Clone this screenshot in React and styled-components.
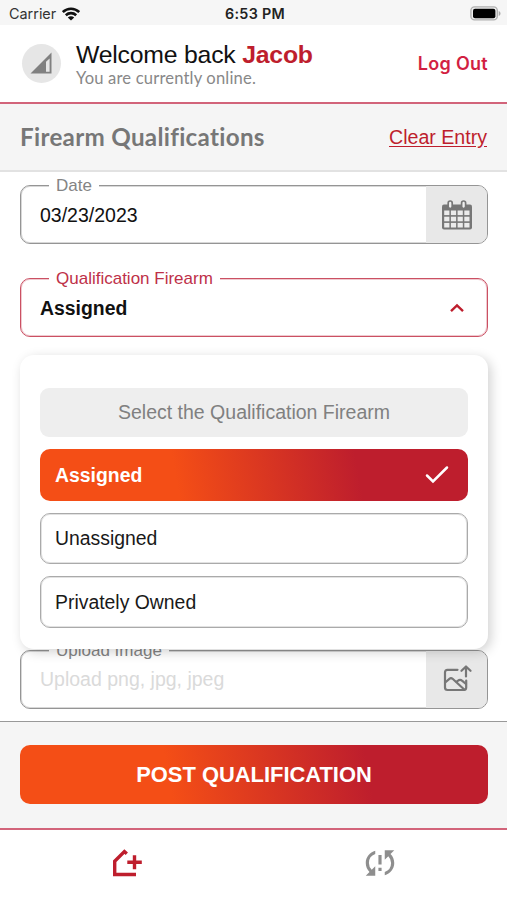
import styled, { createGlobalStyle, css } from "styled-components";
import { MdSyncProblem } from "react-icons/md";

const GlobalStyle = createGlobalStyle`
  * {
    box-sizing: border-box;
    margin: 0;
    padding: 0;
  }

  body {
    background: #fff;
    font-family: "Liberation Sans", Arial, sans-serif;
  }

  svg {
    display: block;
    flex-shrink: 0;
  }

  button {
    border: none;
    background: none;
    font-family: inherit;
  }
`;

const gradient = css`
  background: linear-gradient(80deg, #f44e16 32%, #be1e2d 74%);
`;

const Screen = styled.div`
  display: flex;
  flex-direction: column;
  width: 507px;
  height: 900px;
  overflow: hidden;
`;

const StatusBar = styled.div`
  display: grid;
  grid-template-columns: 1fr auto 1fr;
  align-items: center;
  height: 25px;
  padding: 2px 6px 0 9px;
  background: #f6f6f6;
  font-family: Inter, sans-serif;
  font-size: 14.4px;
  color: #333;
`;

const Carrier = styled.div`
  display: flex;
  align-items: center;
  gap: 6px;
`;

const Clock = styled.div`
  font-weight: 600;
  font-size: 14.3px;
  letter-spacing: 0.3px;
  color: #222;
`;

const Battery = styled.div`
  justify-self: end;
  margin-top: -1px;
`;

const Header = styled.header`
  display: flex;
  align-items: center;
  height: 79px;
  padding: 0 19px 0 22px;
  border-bottom: 2px solid #d2647a;
`;

const Avatar = styled.div`
  display: grid;
  place-items: center;
  width: 39px;
  height: 39px;
  margin-right: 15px;
  padding: 0 2px 1px 0;
  border-radius: 50%;
  background: #e6e6e6;
`;

const Greeting = styled.div`
  flex: 1;
`;

const Welcome = styled.h1`
  font-size: 24.8px;
  line-height: 28px;
  font-weight: 400;
  letter-spacing: -0.22px;
  color: #111;
  white-space: nowrap;

  strong {
    color: #be1e2d;
  }
`;

const OnlineStatus = styled.p`
  font-family: Lato, sans-serif;
  font-size: 16.6px;
  line-height: 18px;
  letter-spacing: 0.16px;
  color: #888;
`;

const LogOut = styled.button`
  font-family: Inter, sans-serif;
  font-size: 18px;
  font-weight: 600;
  letter-spacing: 0.3px;
  color: #d21f42;
`;

const TitleBar = styled.div`
  display: flex;
  align-items: center;
  justify-content: space-between;
  height: 68px;
  padding: 0 20px;
  border-bottom: 2px solid #e2e2e2;
  background: #f5f5f5;
`;

const Title = styled.h2`
  margin-top: -2px;
  font-family: Lato, sans-serif;
  font-size: 24.2px;
  font-weight: 700;
  font-variant-ligatures: none;
  letter-spacing: 0.3px;
  color: #777;
`;

const ClearEntry = styled.a`
  padding-top: 1px;
  font-size: 19.6px;
  color: #be1e2d;
  text-decoration: underline;
  text-underline-offset: 2px;
`;

const Form = styled.main`
  flex: 1;
  min-height: 0;
  padding: 13px 19px 0 20px;
`;

const StyledField = styled.div`
  position: relative;
  display: flex;
  align-items: center;
  justify-content: space-between;
  height: 59px;
  margin-top: ${(props) => props.$top || "0"};
  border: 1px solid ${(props) => (props.$active ? "#cb5063" : "#959595")};
  border-radius: 10px;
  box-shadow: inset 0 0 0 1px
    ${(props) => (props.$active ? "rgba(203, 80, 99, 0.3)" : "#d8d8d8")};
  color: ${(props) => (props.$active ? "#be3048" : "#848484")};
`;

const FieldLabel = styled.label`
  position: absolute;
  top: -9px;
  left: 28px;
  padding: 0 7px;
  background: #fff;
  font-size: 17px;
  line-height: 18px;
  white-space: nowrap;
`;

const FieldValue = styled.div`
  padding: 1px 0 0 19px;
  font-size: ${(props) => (props.$bold ? "19.4px" : "19.5px")};
  font-weight: ${(props) => (props.$bold ? 700 : 400)};
  color: ${(props) => (props.$muted ? "#dadada" : "#111")};
`;

const Addon = styled.div`
  display: grid;
  place-items: center;
  align-self: stretch;
  width: 61px;
  border-radius: 0 9px 9px 0;
  background: #e8e8e8;
`;

const Caret = styled.div`
  padding-right: 22px;
`;

const Menu = styled.div`
  position: relative;
  z-index: 1;
  display: flex;
  flex-direction: column;
  gap: 12px;
  height: 294px;
  margin-top: 18px;
  padding: 33px 20px 0;
  border-radius: 14px;
  background: #fff;
  box-shadow: 3px 3px 12px rgba(0, 0, 0, 0.18);
`;

const MenuHint = styled.div`
  height: 49px;
  border-radius: 9px;
  background: #eee;
  font-size: 19.5px;
  line-height: 49px;
  text-align: center;
  color: #808080;
`;

const Option = styled.div`
  display: flex;
  align-items: center;
  justify-content: space-between;
  height: 51.5px;
  padding: 1px 18px 0 14px;
  border: 1px solid #aaa;
  border-radius: 10px;
  box-shadow: inset 0 0 0 1px #e2e2e2;
  font-size: 19.4px;
  color: #191919;

  ${(props) =>
    props.$selected &&
    css`
      ${gradient}
      padding: 1px 19px 0 15px;
      border: none;
      box-shadow: none;
      font-weight: 700;
      color: #fff;
    `}
`;

const Footer = styled.footer`
  height: 109px;
  padding: 23px 19px 0 20px;
  border-top: 1px solid #999;
  border-bottom: 2px solid #d2647a;
  background: #f5f5f5;
`;

const PostButton = styled.button`
  ${gradient}
  display: block;
  width: 100%;
  height: 59px;
  border-radius: 10px;
  font-size: 21.9px;
  font-weight: 700;
  color: #fff;
`;

const TabBar = styled.nav`
  display: grid;
  grid-template-columns: 1fr 1fr;
  height: 70px;
  padding-bottom: 4px;
`;

const Tab = styled.div`
  display: grid;
  place-items: center;
  color: ${(props) => (props.$active ? "#be1e2d" : "#8e8e8e")};
`;

function WifiIcon() {
  return (
    <svg width="18" height="14" viewBox="0 0 18 14">
      <path
        d="M.8 5C5.5.6 12.5.6 17.2 5M3.8 8.2c3-2.8 7.4-2.8 10.4 0"
        fill="none"
        stroke="#111"
        strokeWidth="2.6"
      />
      <path d="M9 13.6 5.8 10.4c1.8-1.6 4.6-1.6 6.4 0z" fill="#111" />
    </svg>
  );
}

function BatteryIcon() {
  return (
    <svg width="31" height="15" viewBox="0 0 31 15">
      <rect
        x="0.9"
        y="0.9"
        width="26.4"
        height="13"
        rx="3.6"
        fill="#eee"
        stroke="#b0b0b0"
        strokeWidth="1.4"
      />
      <rect x="3" y="2.7" width="22.4" height="9.6" rx="2" fill="#000" />
      <path d="M28.7 5c2.4 1 2.4 4 0 5z" fill="#aaa" />
    </svg>
  );
}

function SignalIcon() {
  return (
    <svg width="24" height="24" viewBox="0 0 24 24">
      <path d="M1.5 22.5h21V1.5z" fill="#808080" />
      <path d="M17 20.8h3.6V7.4L17 10.8z" fill="#e6e6e6" />
    </svg>
  );
}

function CalendarIcon() {
  return (
    <svg width="30" height="30" viewBox="0 0 30 30">
      <rect x="0" y="4.5" width="30" height="25" rx="2" fill="#777" />
      <g fill="#ebebeb">
        {[10.5, 16.7, 22.9].map((y) =>
          [2.2, 8.9, 15.6, 22.3].map((x) => (
            <rect key={`${x}-${y}`} x={x} y={y} width="5.2" height="4.6" />
          ))
        )}
      </g>
      <g fill="#f0f0f0" stroke="#777" strokeWidth="1.7">
        <rect x="6.2" y="1" width="4" height="7.6" rx="2" />
        <rect x="19.6" y="1" width="4" height="7.6" rx="2" />
      </g>
    </svg>
  );
}

function UploadImageIcon() {
  return (
    <svg
      width="30"
      height="30"
      viewBox="0 0 30 30"
      fill="none"
      stroke="#777"
      strokeWidth="2.2"
      strokeLinecap="round"
      strokeLinejoin="round"
    >
      <path d="M15.5 5.8H5.5Q3 5.8 3 8.3v15.2Q3 26 5.5 26h16.2q2.5 0 2.5-2.5v-7" />
      <path d="m3.2 18.5 4.2-3.7q1.6-1.4 3.2 0L22.5 25.8" />
      <path d="m14.5 17.8 1.2-1q2.4-1.7 4.6 0l3.7 3.2" />
      <path d="M24 12.5V3M19.5 6.8 24 2.5l4.5 4.3" />
    </svg>
  );
}

function HomePlusIcon() {
  return (
    <svg
      width="32"
      height="30"
      viewBox="0 0 32 30"
      fill="none"
      stroke="currentColor"
      strokeWidth="3.4"
    >
      <path d="m15.8 5.7-2.4-2.2-9.7 9.7v13.3H25" />
      <path d="M23.5 7.2v14M16.3 14.2h14.5" />
    </svg>
  );
}

function Field({ label, value, top, active, bold, muted, children }) {
  return (
    <StyledField $top={top} $active={active}>
      <FieldLabel>{label}</FieldLabel>
      <FieldValue $bold={bold} $muted={muted}>
        {value}
      </FieldValue>
      {children}
    </StyledField>
  );
}

const options = ["Assigned", "Unassigned", "Privately Owned"];

function FirearmMenu({ selected }) {
  return (
    <Menu>
      <MenuHint>Select the Qualification Firearm</MenuHint>
      {options.map((option) => (
        <Option key={option} $selected={option === selected}>
          {option}
          {option === selected && (
            <svg width="24" height="20" viewBox="0 0 24 20">
              <path
                d="m2 10.5 6 6L22 2.5"
                fill="none"
                stroke="#fff"
                strokeWidth="2.5"
                strokeLinecap="round"
              />
            </svg>
          )}
        </Option>
      ))}
    </Menu>
  );
}

function App() {
  return (
    <>
      <GlobalStyle />
      <Screen>
        <StatusBar>
          <Carrier>
            Carrier
            <WifiIcon />
          </Carrier>
          <Clock>6:53 PM</Clock>
          <Battery>
            <BatteryIcon />
          </Battery>
        </StatusBar>

        <Header>
          <Avatar>
            <SignalIcon />
          </Avatar>
          <Greeting>
            <Welcome>
              Welcome back <strong>Jacob</strong>
            </Welcome>
            <OnlineStatus>You are currently online.</OnlineStatus>
          </Greeting>
          <LogOut>Log Out</LogOut>
        </Header>

        <TitleBar>
          <Title>Firearm Qualifications</Title>
          <ClearEntry>Clear Entry</ClearEntry>
        </TitleBar>

        <Form>
          <Field label="Date" value="03/23/2023">
            <Addon>
              <CalendarIcon />
            </Addon>
          </Field>
          <Field
            label="Qualification Firearm"
            value="Assigned"
            top="34px"
            active
            bold
          >
            <Caret>
              <svg width="16" height="10" viewBox="0 0 16 10">
                <path
                  d="m2 8.2 6-5.7 6 5.7"
                  fill="none"
                  stroke="#be1e2d"
                  strokeWidth="2.4"
                />
              </svg>
            </Caret>
          </Field>
          <FirearmMenu selected="Assigned" />
          <Field
            label="Upload Image"
            value="Upload png, jpg, jpeg"
            top="0.5px"
            muted
          >
            <Addon>
              <UploadImageIcon />
            </Addon>
          </Field>
        </Form>

        <Footer>
          <PostButton>POST QUALIFICATION</PostButton>
        </Footer>

        <TabBar>
          <Tab $active>
            <HomePlusIcon />
          </Tab>
          <Tab>
            <MdSyncProblem size={38} />
          </Tab>
        </TabBar>
      </Screen>
    </>
  );
}

export default App;
